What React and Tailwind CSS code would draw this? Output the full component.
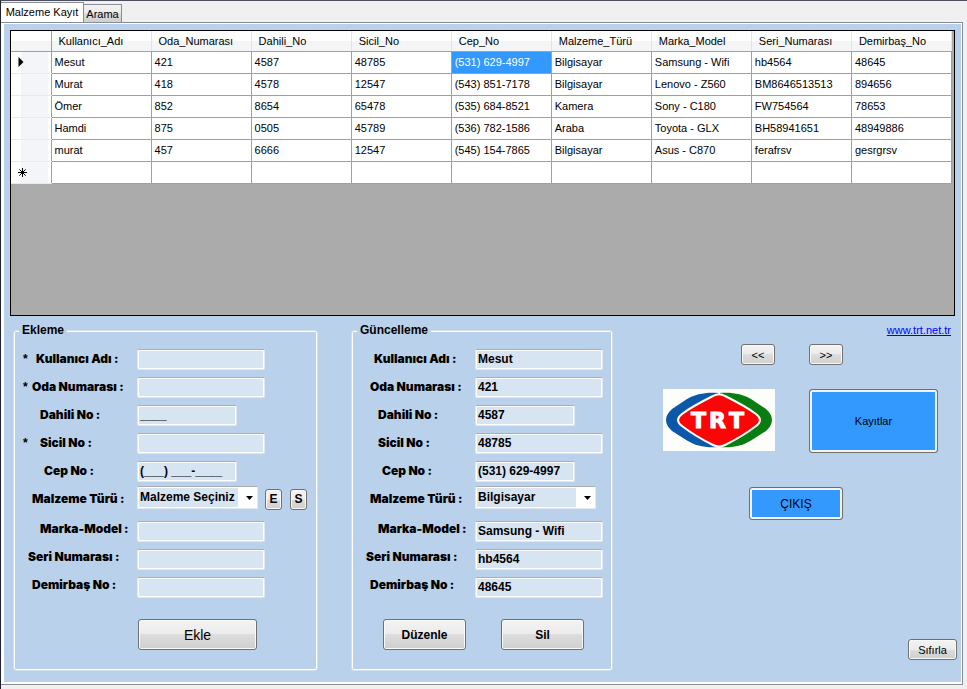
import React, { useState } from "react";

const COLUMNS = [
  "Kullanıcı_Adı",
  "Oda_Numarası",
  "Dahili_No",
  "Sicil_No",
  "Cep_No",
  "Malzeme_Türü",
  "Marka_Model",
  "Seri_Numarası",
  "Demirbaş_No",
];

const RECORDS = [
  ["Mesut", "421", "4587", "48785", "(531) 629-4997", "Bilgisayar", "Samsung - Wifi", "hb4564", "48645"],
  ["Murat", "418", "4578", "12547", "(543) 851-7178", "Bilgisayar", "Lenovo - Z560", "BM8646513513", "894656"],
  ["Ömer", "852", "8654", "65478", "(535) 684-8521", "Kamera", "Sony - C180", "FW754564", "78653"],
  ["Hamdi", "875", "0505", "45789", "(536) 782-1586", "Araba", "Toyota - GLX", "BH58941651", "48949886"],
  ["murat", "457", "6666", "12547", "(545) 154-7865", "Bilgisayar", "Asus - C870", "ferafrsv", "gesrgrsv"],
  ["", "", "", "", "", "", "", "", ""],
];

const MAIN_FIELDS = [
  { key: "user", label: "Kullanıcı Adı :", indent: "pl-2", width: "w-32", required: true },
  { key: "room", label: "Oda Numarası :", indent: "pl-1", width: "w-32", required: true },
  { key: "ext", label: "Dahili No :", indent: "pl-3", width: "w-[100px]" },
  { key: "reg", label: "Sicil No :", indent: "pl-3", width: "w-32", required: true },
  { key: "phone", label: "Cep No :", indent: "pl-4", width: "w-[100px]" },
];

const ITEM_FIELDS = [
  { key: "model", label: "Marka-Model :", indent: "pl-3" },
  { key: "serial", label: "Seri Numarası :", indent: "pl-0" },
  { key: "asset", label: "Demirbaş No :", indent: "pl-1" },
];

const EMPTY = { user: "", room: "", ext: "____", reg: "", phone: "(___) ___-____", model: "", serial: "", asset: "" };
const CURRENT = {
  user: "Mesut",
  room: "421",
  ext: "4587",
  reg: "48785",
  phone: "(531) 629-4997",
  model: "Samsung - Wifi",
  serial: "hb4564",
  asset: "48645",
};

function Button({ className, children }) {
  return (
    <button
      type="button"
      className={
        "rounded-[3px] border border-[#707070] bg-[linear-gradient(#f3f3f3,#ebebeb_50%,#dddddd_50%,#cfcfcf)] shadow-[inset_0_0_0_1px_#fafafa] " +
        className
      }
    >
      {children}
    </button>
  );
}

function BlueButton({ className, children }) {
  return (
    <button
      type="button"
      className={
        "rounded-[3px] border border-[#707070] bg-[#3399ff] shadow-[inset_0_0_0_2px_#f4f4f4] " + className
      }
    >
      {children}
    </button>
  );
}

function Label({ htmlFor, indent, className, children }) {
  return (
    <label
      htmlFor={htmlFor}
      className={
        "w-[109px] shrink-0 whitespace-nowrap font-[Inter,sans-serif] text-xs leading-4 font-black " +
        indent +
        " " +
        (className || "")
      }
    >
      {children}
    </label>
  );
}

function TextBox({ id, value, onChange, width }) {
  return (
    <input
      id={id}
      type="text"
      value={value}
      onChange={onChange}
      className={
        "h-[21px] rounded-[2px] border border-[#e2e8ee] border-t-[#abadb3] bg-[#d7e4f2] px-0.5 text-xs font-bold text-black shadow-[inset_0_0_0_1px_#ffffff] outline-none " +
        width
      }
    />
  );
}

function Combo({ id, options }) {
  return (
    <div className="relative mb-1 h-[23px] w-[121px]">
      <select
        id={id}
        className="block h-full w-full appearance-none border border-[#e2e8ee] border-t-[#abadb3] bg-[linear-gradient(to_right,#d7e4f2_100px,#ffffff_100px)] pl-0.5 text-xs font-bold text-black shadow-[inset_0_0_0_1px_#ffffff] outline-none"
      >
        {options.map((o) => (
          <option key={o}>{o}</option>
        ))}
      </select>
      <svg viewBox="0 0 7 4" className="pointer-events-none absolute top-[10px] right-[5px] h-1 w-[7px]" aria-hidden="true">
        <path d="M0 0H7L3.5 4Z" fill="#000" />
      </svg>
    </div>
  );
}

function RecordForm({ prefix, title, initial, options, required, comboExtra, footer, className }) {
  const [values, setValues] = useState(initial);
  const update = (key) => (e) => setValues({ ...values, [key]: e.target.value });
  return (
    <fieldset
      className={
        "shrink-0 rounded-[3px] border border-[#d5dfe5] pb-5 pl-[9px] shadow-[inset_0_0_0_1px_#ffffff] " + className
      }
    >
      <legend className="-ml-1 bg-[#b9d1ea] px-[3px] text-xs leading-4 font-bold">{title}</legend>
      <div className="pt-[7px]">
        {MAIN_FIELDS.map((f) => (
          <div key={f.key} className="flex h-7 items-center">
            <span className="w-[5px] shrink-0 text-xs leading-4 font-bold">{required && f.required ? "*" : ""}</span>
            <Label htmlFor={prefix + f.key} indent={f.indent}>
              {f.label}
            </Label>
            <TextBox id={prefix + f.key} value={values[f.key]} onChange={update(f.key)} width={f.width} />
          </div>
        ))}
        <div className="flex h-7 items-center pl-[5px]">
          <Label htmlFor={prefix + "type"} indent="pl-1">
            Malzeme Türü :
          </Label>
          <Combo id={prefix + "type"} options={options} />
          {comboExtra}
        </div>
      </div>
      <div className="mt-1">
        {ITEM_FIELDS.map((f) => (
          <div key={f.key} className="flex h-7 items-center pl-[5px]">
            <Label htmlFor={prefix + f.key} indent={f.indent} className="pb-1">
              {f.label}
            </Label>
            <TextBox id={prefix + f.key} value={values[f.key]} onChange={update(f.key)} width="w-32" />
          </div>
        ))}
      </div>
      {footer}
    </fieldset>
  );
}

function Logo() {
  return (
    <svg viewBox="0 0 112 62" className="h-[62px] w-28" role="img" aria-label="TRT">
      <rect width="112" height="62" fill="#fdfefb" />
      <path d="M56 4C42 3 33 5 24 10L9 20Q-3 31 9 42L24 51.500C33 57 42 59 56 58Z" fill="#0b57a8" />
      <path d="M56 4C70 3 79 5 88 10L103 20Q115 31 103 42L88 51.500C79 57 70 59 56 58Z" fill="#0a7d12" />
      <path
        d="M50 7Q56 3.500 62 7C74 13 84 18 93 25Q101 31 93 37C84 44 74 50 62 56Q56 59 50 56C38 50 28 44 19 37Q11 31 19 25C28 18 38 13 50 7Z"
        fill="#fb0606"
        stroke="#fdfefb"
        strokeWidth="2"
      />
      <path d="M55.500 0h1.500v5h-1.500zM55.500 57h1.500v5h-1.500z" fill="#fdfefb" />
      <text
        x="28 46 66"
        y="39"
        fill="#fff"
        stroke="#fff"
        strokeWidth="1"
        fontFamily="'DejaVu Sans', sans-serif"
        fontWeight="700"
        fontSize="22"
      >
        TRT
      </text>
    </svg>
  );
}

function RecordTable() {
  return (
    <div className="h-[286px] overflow-hidden border border-black bg-[#ababab]">
      <table className="w-[941px] table-fixed border-collapse bg-white">
        <colgroup>
          <col className="w-10" />
          {COLUMNS.map((c) => (
            <col key={c} className="w-[100px]" />
          ))}
        </colgroup>
        <thead>
          <tr className="h-5 bg-[linear-gradient(#ffffff_50%,#f4f5f7_50%)]">
            <th className="border-r border-b border-[#a0a0a0]" aria-label="Satır" />
            {COLUMNS.map((c) => (
              <th
                key={c}
                className="border-r border-b border-r-[#e2e3e6] border-b-[#a0a0a0] p-0 pl-[7px] text-left font-normal"
              >
                {c}
              </th>
            ))}
          </tr>
        </thead>
        <tbody>
          {RECORDS.map((row, r) => (
            <tr key={r} className="h-[22px]">
              <th className="border-r border-b border-r-[#a0a0a0] border-b-[#e8e9ec] bg-[linear-gradient(to_right,#ffffff_10px,#f4f5f8_10px,#f4f5f8_37px,#ffffff_37px)] p-0">
                {r === 0 && (
                  <svg viewBox="0 0 6 10" className="ml-[7px] h-[10px] w-[6px]" aria-hidden="true">
                    <path d="M0.500 0L5.500 5L0.500 10Z" fill="#000" />
                  </svg>
                )}
                {r === RECORDS.length - 1 && (
                  <svg viewBox="0 0 9 9" className="ml-[7px] h-[9px] w-[9px]" aria-hidden="true">
                    <path d="M4.500 0V9M0 4.500H9M1.300 1.300L7.700 7.700M7.700 1.300L1.300 7.700" stroke="#000" />
                  </svg>
                )}
              </th>
              {row.map((cell, c) => (
                <td
                  key={c}
                  className={
                    "border-r border-b border-[#a0a0a0] p-0 pl-[3px] whitespace-nowrap " +
                    (r === 0 && c === 4 ? "bg-[#3399ff] text-white" : "")
                  }
                >
                  {cell}
                </td>
              ))}
            </tr>
          ))}
        </tbody>
      </table>
    </div>
  );
}

export default function App() {
  return (
    <div className="flex min-h-screen flex-col border-t border-l border-t-[#4a4d5c] border-l-[#1e2230] bg-[#f0f0f0] pr-1 pb-1 font-['Liberation_Sans',Arial,sans-serif] text-[11px] leading-4 text-black">
      <div role="tablist" className="flex items-end pt-px">
        <button
          type="button"
          role="tab"
          aria-selected="true"
          className="-mb-px h-[21px] w-[83px] border border-b-0 border-l-0 border-[#898c95] bg-white pb-0.5"
        >
          Malzeme Kayıt
        </button>
        <button
          type="button"
          role="tab"
          aria-selected="false"
          className="h-[18px] w-[38px] border border-b-0 border-l-0 border-[#898c95] bg-[linear-gradient(#f2f2f2,#ebebeb_50%,#dddddd_50%,#cfcfcf)]"
        >
          Arama
        </button>
      </div>
      <main className="flex grow flex-col border-t border-r border-b border-[#898c95] bg-white pt-px pr-px pb-0.5 pl-[3px]">
        <div className="grow bg-[#b9d1ea] px-1.5 pt-1.5 pb-[11px]">
          <RecordTable />
          <div className="flex items-stretch pt-1.5 pl-[3px]">
            <RecordForm
              prefix="add-"
              title="Ekleme"
              className="w-[305px]"
              initial={EMPTY}
              options={["Malzeme Seçiniz", "Bilgisayar", "Kamera", "Araba"]}
              required
              comboExtra={
                <div className="ml-[7px] flex gap-2">
                  <Button className="h-[21px] w-[17px] text-xs font-bold">E</Button>
                  <Button className="h-[21px] w-[17px] text-xs font-bold">S</Button>
                </div>
              }
              footer={<Button className="mt-[18px] ml-[115px] block h-[31px] w-[119px] text-sm">Ekle</Button>}
            />
            <RecordForm
              prefix="edit-"
              title="Güncelleme"
              className="ml-[33px] w-[262px]"
              initial={CURRENT}
              options={["Bilgisayar", "Kamera", "Araba"]}
              footer={
                <div className="mt-[18px] flex gap-[35px] pl-[22px]">
                  <Button className="h-[31px] w-[83px] text-xs font-bold">Düzenle</Button>
                  <Button className="h-[31px] w-[83px] text-xs font-bold">Sil</Button>
                </div>
              }
            />
            <div className="flex grow flex-col items-end">
              <a href="http://www.trt.net.tr" className="mr-1 text-[#0000ff] underline">
                www.trt.net.tr
              </a>
              <div className="mt-1.5 mr-[17px] grid grid-cols-[112px_129px] gap-x-[34px] gap-y-6">
                <Button className="h-[21px] w-[34px] justify-self-end">&lt;&lt;</Button>
                <Button className="h-[21px] w-[34px]">&gt;&gt;</Button>
                <Logo />
                <BlueButton className="h-16">Kayıtlar</BlueButton>
              </div>
              <BlueButton className="mt-[34px] mr-28 h-[33px] w-[94px]">
                <span className="text-xs">ÇIKIŞ</span>
              </BlueButton>
              <Button className="mt-auto mb-[11px] -mr-0.5 h-[21px] w-[49px]">Sıfırla</Button>
            </div>
          </div>
        </div>
      </main>
    </div>
  );
}
